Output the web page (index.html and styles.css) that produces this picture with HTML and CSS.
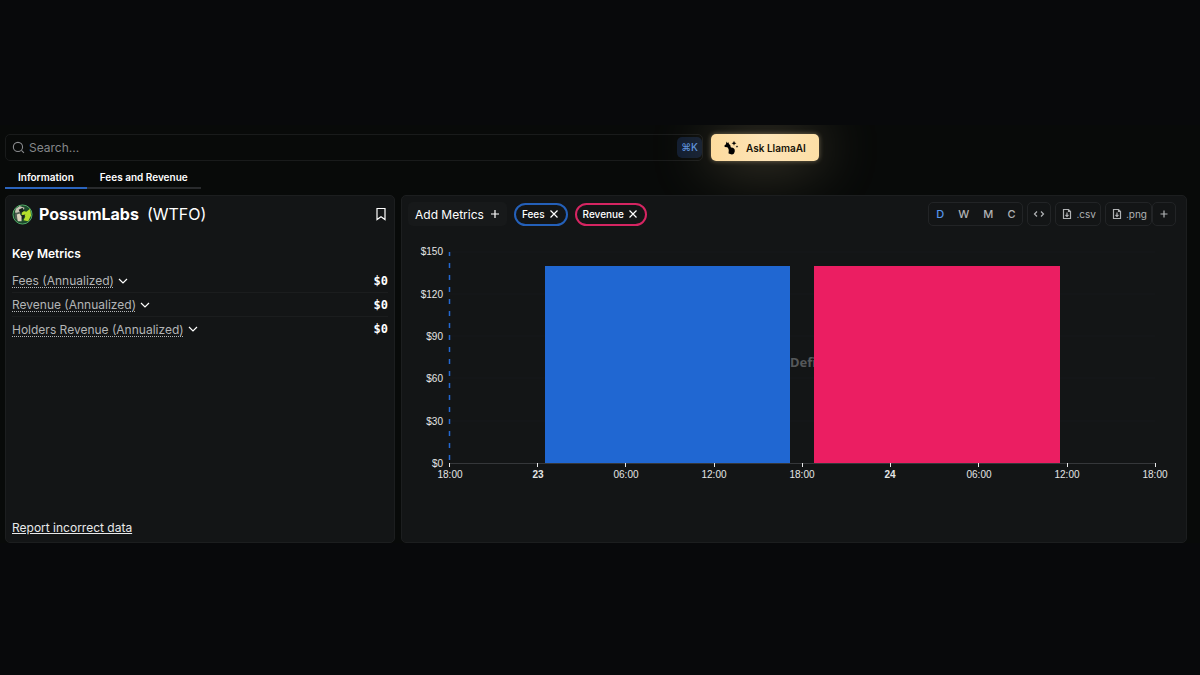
FILE: index.html
```html
<!DOCTYPE html>
<html lang="en">
  <head>
    <meta charset="UTF-8" />
    <meta name="viewport" content="width=device-width, initial-scale=1.0" />
    <title>PossumLabs - DefiLlama</title>
    <link rel="stylesheet" href="styles.css">
  </head>
  <body>
    <div class="page">
      <header class="topbar">
        <label class="search">
          <svg class="search__icon" viewBox="0 0 24 24" aria-hidden="true"><circle cx="11" cy="11" r="8.500" /><path d="M17.500 17.500L22 22" /></svg>
          <input class="search__input" type="search" placeholder="Search..." aria-label="Search" />
          <span class="search__shortcut">⌘K</span>
        </label>
        <button class="ask-button" type="button">
          <svg class="ask-button__icon" viewBox="0 0 16 16" aria-hidden="true">
            <path d="M3.600 1.600L4.300 3L5.400 2.200L6 3.900L7.300 5.200C7.600 6.300 7.600 7 8.200 7.600C10.600 7.600 12 9 11.800 11.200L11 13.600C9.800 14.800 7.600 14.600 5.600 13.600C5.300 12 6.300 10.600 5.400 8.700L4.400 7.300L1.800 7L1.300 5.700L2.900 4.200Z" />
            <path d="M11 .8L11.700 2.600L13.500 3.300L11.700 4L11 5.800L10.300 4L8.500 3.300L10.300 2.600ZM14 5.300L14.400 6.200L15.300 6.600L14.400 7L14 7.900L13.600 7L12.700 6.600L13.600 6.200Z" />
          </svg>
          Ask LlamaAI
        </button>
      </header>

      <nav class="tabs">
        <a class="tabs__link tabs__link--active" href="#information">Information</a>
        <a class="tabs__link" href="#fees">Fees and Revenue</a>
      </nav>

      <main class="panels">
        <section class="panel info" id="information">
          <div class="info__heading">
            <svg class="info__logo" viewBox="0 0 22 22" aria-hidden="true">
              <circle cx="11" cy="11" r="10" fill="#1d4a2c" />
              <path d="M4 5L8 2L13 4L12 8L8 10L3 9Z" fill="#c7c3b4" />
              <path d="M3 10L8 8L9 12L6 17L3 15Z" fill="#4d5c52" />
              <path d="M11 7L15 8L19 5L20 12L17 18L12 17L14 13L10 11Z" fill="#b5e02c" />
              <path d="M7 6L11 4L13 7L9 10ZM9 12L14 11L12 15L9 17Z" fill="#18241d" />
              <path d="M5 11L8 10L10 13L10 18L6 18Z" fill="#dad3bd" />
              <circle cx="11" cy="11" r="10" fill="none" stroke="#55b06c" />
            </svg>
            <h1 class="info__name">PossumLabs</h1>
            <span class="info__symbol">(WTFO)</span>
            <button class="info__bookmark" type="button" aria-label="Bookmark">
              <svg class="icon" viewBox="0 0 14 14" aria-hidden="true"><path d="M3 1.500H11V12.500L7 9.700L3 12.500Z" /></svg>
            </button>
          </div>
          <h2 class="info__subtitle">Key Metrics</h2>
          <dl class="metrics">
            <div class="metrics__row">
              <dt><button class="metrics__label" type="button"><span>Fees (Annualized)</span><svg class="icon" viewBox="0 0 14 14" aria-hidden="true"><path d="M3 5L7 9L11 5" /></svg></button></dt>
              <dd>$0</dd>
            </div>
            <div class="metrics__row">
              <dt><button class="metrics__label" type="button"><span>Revenue (Annualized)</span><svg class="icon" viewBox="0 0 14 14" aria-hidden="true"><path d="M3 5L7 9L11 5" /></svg></button></dt>
              <dd>$0</dd>
            </div>
            <div class="metrics__row">
              <dt><button class="metrics__label" type="button"><span>Holders Revenue (Annualized)</span><svg class="icon" viewBox="0 0 14 14" aria-hidden="true"><path d="M3 5L7 9L11 5" /></svg></button></dt>
              <dd>$0</dd>
            </div>
          </dl>
          <a class="info__report" href="#report">Report incorrect data</a>
        </section>

        <section class="panel" id="fees">
          <div class="toolbar">
            <button class="toolbar__add" type="button">Add Metrics <svg class="icon" viewBox="0 0 14 14" aria-hidden="true"><path d="M7 3V11M3 7H11" /></svg></button>
            <button class="pill pill--fees" type="button">Fees <svg class="icon" viewBox="0 0 14 14" aria-hidden="true"><path d="M3.500 3.500L10.500 10.500M10.500 3.500L3.500 10.500" /></svg></button>
            <button class="pill pill--revenue" type="button">Revenue <svg class="icon" viewBox="0 0 14 14" aria-hidden="true"><path d="M3.500 3.500L10.500 10.500M10.500 3.500L3.500 10.500" /></svg></button>
            <div class="toolbar__actions">
              <div class="interval">
                <button class="interval__button interval__button--active" type="button">D</button>
                <button class="interval__button" type="button">W</button>
                <button class="interval__button" type="button">M</button>
                <button class="interval__button" type="button">C</button>
              </div>
              <button class="action" type="button" aria-label="Embed"><svg class="icon" viewBox="0 0 14 14" aria-hidden="true"><path d="M5 4.500L2.500 7L5 9.500M9 4.500L11.500 7L9 9.500" /></svg></button>
              <button class="action" type="button"><svg class="icon" viewBox="0 0 14 14" aria-hidden="true"><path d="M8.500 2.500H3.500V11.500H10.500V4.500ZM8.500 2.500V4.500H10.500M7 5.500V9.500M5.500 8L7 9.500L8.500 8" /></svg>.csv</button>
              <div class="toolbar__group">
                <button class="action" type="button"><svg class="icon" viewBox="0 0 14 14" aria-hidden="true"><path d="M8.500 2.500H3.500V11.500H10.500V4.500ZM8.500 2.500V4.500H10.500M7 5.500V9.500M5.500 8L7 9.500L8.500 8" /></svg>.png</button>
                <button class="action" type="button" aria-label="Add to dashboard"><svg class="icon" viewBox="0 0 14 14" aria-hidden="true"><path d="M7 3.500V10.500M3.500 7H10.500" /></svg></button>
              </div>
            </div>
          </div>

          <svg class="chart" viewBox="0 0 784 250" role="img" aria-label="Fees and revenue">
            <path class="chart__grid" d="M47 20H753M47 62H753M47 104H753M47 146H753M47 189H753" />
            <text class="chart__watermark" x="388" y="135">DefiLlama</text>
            <path class="chart__axis" d="M47 231.500H754" />
            <path class="chart__marker" d="M47.500 20V231" />
            <rect x="143" y="34" width="245" height="197" fill="#2067d2" />
            <rect x="412" y="34" width="246" height="197" fill="#eb1e62" />
            <path class="chart__ticks" d="M47.500 231V235M135.500 231V235M223.500 231V235M312.500 231V235M400.500 231V235M488.500 231V235M576.500 231V235M665.500 231V235M753.500 231V235" />
            <g class="chart__labels chart__labels--y">
              <text x="41" y="23">$150</text>
              <text x="41" y="66">$120</text>
              <text x="41" y="108">$90</text>
              <text x="41" y="150">$60</text>
              <text x="41" y="193">$30</text>
              <text x="41" y="235">$0</text>
            </g>
            <g class="chart__labels">
              <text x="48" y="246">18:00</text>
              <text class="chart__day" x="136" y="246">23</text>
              <text x="224" y="246">06:00</text>
              <text x="312" y="246">12:00</text>
              <text x="400" y="246">18:00</text>
              <text class="chart__day" x="488" y="246">24</text>
              <text x="577" y="246">06:00</text>
              <text x="665" y="246">12:00</text>
              <text x="753" y="246">18:00</text>
            </g>
          </svg>
        </section>
      </main>
    </div>
  </body>
</html>
```

FILE: styles.css
```css
/* General Styles */
* {
  box-sizing: border-box;
}

body {
  margin: 0;
  padding-top: 125px;
  background-color: #08090b;
  color: #fff;
  font-family: Inter, "Liberation Sans", sans-serif;
  font-size: 12px;
}

h1,
h2,
dl,
dd {
  margin: 0;
}

button {
  padding: 0;
  border: none;
  background: none;
  color: inherit;
  font: inherit;
  cursor: pointer;
}

.icon {
  flex: none;
  width: 14px;
  height: 14px;
  fill: none;
  stroke: currentColor;
  stroke-width: 1.2;
}

.page {
  overflow: hidden;
  padding: 9px 13px 0 5px;
  background-color: #080a09;
}

/* Top Bar Styles */
.topbar {
  display: flex;
  align-items: center;
  gap: 8px;
}

.search {
  display: flex;
  align-items: center;
  flex: 0 1 698px;
  gap: 4px;
  height: 27px;
  padding: 0 0 0 6px;
  border: 1px solid #191b1b;
  border-radius: 5px;
}

.search__icon {
  width: 13px;
  height: 13px;
  fill: none;
  stroke: #8b8d90;
  stroke-width: 2;
}

.search__input {
  flex: 1;
  min-width: 0;
  padding: 0;
  border: none;
  outline: none;
  background: none;
  color: #fff;
  font: inherit;
}

.search__input::placeholder {
  color: #85878a;
}

.search__shortcut {
  padding: 0 4px;
  border-radius: 5px;
  background-color: #111d30;
  color: #5b91dd;
  font-size: 10px;
  font-weight: 500;
  line-height: 21px;
}

.ask-button {
  display: flex;
  align-items: center;
  gap: 7px;
  height: 27px;
  padding: 0 13px 0 12px;
  border-radius: 5px;
  background: linear-gradient(90deg, #fddb9d, #fde4b8 50%, #fddfa5);
  box-shadow: 0 0 5px rgba(253, 224, 169, 0.4), 0 0 60px rgba(253, 224, 169, 0.35);
  color: #171307;
  font-size: 10px;
  font-weight: 600;
}

.ask-button__icon {
  width: 16px;
  height: 16px;
}

/* Tabs Styles */
.tabs {
  display: flex;
  margin-top: 6px;
}

.tabs__link {
  padding: 0 13px;
  border-bottom: 2px solid #292b2d;
  color: #fff;
  font-size: 10px;
  font-weight: 600;
  line-height: 20px;
  text-decoration: none;
}

.tabs__link--active {
  border-color: #2b64bd;
}

/* Panel Styles */
.panels {
  display: grid;
  grid-template-columns: 390fr 786fr;
  gap: 6px;
  margin-top: 6px;
}

.panel {
  position: relative;
  min-width: 0;
  min-height: 348px;
  border: 1px solid #1c1e1f;
  border-radius: 5px;
  background-color: #131516;
}

.info {
  display: flex;
  flex-direction: column;
  padding: 6px;
}

.info__heading {
  display: flex;
  align-items: center;
  gap: 6px;
  height: 24px;
  font-size: 16px;
}

.info__logo {
  width: 21px;
  height: 21px;
}

.info__name {
  font-size: 16px;
  font-weight: 700;
}

.info__symbol {
  padding-left: 2px;
}

.info__bookmark {
  display: flex;
  margin-left: auto;
}

.info__subtitle {
  margin: 20px 0 7px;
  font-size: 12px;
  font-weight: 600;
  line-height: 16px;
}

.metrics__row {
  display: flex;
  align-items: center;
  justify-content: space-between;
  height: 24px;
  border-bottom: 1px solid #1b1d1e;
}

.metrics__row:last-child {
  border-bottom: none;
}

.metrics__row dd {
  font-family: "DejaVu Sans Mono", monospace;
  font-weight: 700;
}

.metrics__label {
  display: flex;
  align-items: center;
  gap: 2px;
}

.metrics__label span {
  color: #b3b5b7;
  text-decoration: underline dotted;
  text-underline-offset: 2px;
}

.info__report {
  align-self: flex-start;
  margin-top: auto;
  color: #e8e9ea;
  line-height: 16px;
}

/* Toolbar Styles */
.toolbar {
  display: flex;
  align-items: center;
  flex-wrap: wrap;
  gap: 7px;
  padding: 6px 10px 0 6px;
}

.toolbar__add,
.pill,
.interval,
.action {
  display: flex;
  align-items: center;
  justify-content: center;
  height: 24px;
  border-radius: 5px;
}

.toolbar__add {
  gap: 4px;
  padding: 0 5px 0 7px;
  background-color: #17191a;
}

.pill {
  gap: 2px;
  height: 23px;
  padding: 0 5px 0 6px;
  border: 2px solid #2460b9;
  border-radius: 12px;
  font-size: 10px;
  font-weight: 500;
}

.pill--revenue {
  border-color: #d52562;
}

.toolbar__actions {
  display: flex;
  gap: 4px;
  margin-left: auto;
  color: #b0b2b4;
}

.toolbar__group {
  display: flex;
}

.interval,
.action {
  border: 1px solid #222426;
}

.interval__button {
  padding: 0 7px;
  font-size: 11px;
  font-weight: 500;
}

.interval__button--active {
  color: #5796ec;
}

.action {
  gap: 2px;
  min-width: 24px;
  padding: 0 4px;
  font-size: 10px;
}

/* Chart Styles */
.chart {
  display: block;
  width: 100%;
  margin-top: 6px;
}

.chart__grid {
  stroke: #17191a;
}

.chart__axis {
  stroke: #35373a;
}

.chart__ticks {
  stroke: #e8e9ea;
}

.chart__marker {
  stroke: #2468d0;
  stroke-width: 1.5;
  stroke-dasharray: 5 7;
  stroke-dashoffset: 1;
}

.chart__labels {
  fill: #e4e5e6;
  font-size: 10px;
  font-family: "Liberation Sans", Arial, sans-serif;
  text-anchor: middle;
}

.chart__labels--y {
  text-anchor: end;
}

.chart__day {
  font-weight: 700;
}

.chart__watermark {
  fill: #55585a;
  font-family: "Noto Sans", sans-serif;
  font-size: 13px;
  font-weight: 700;
}
```
